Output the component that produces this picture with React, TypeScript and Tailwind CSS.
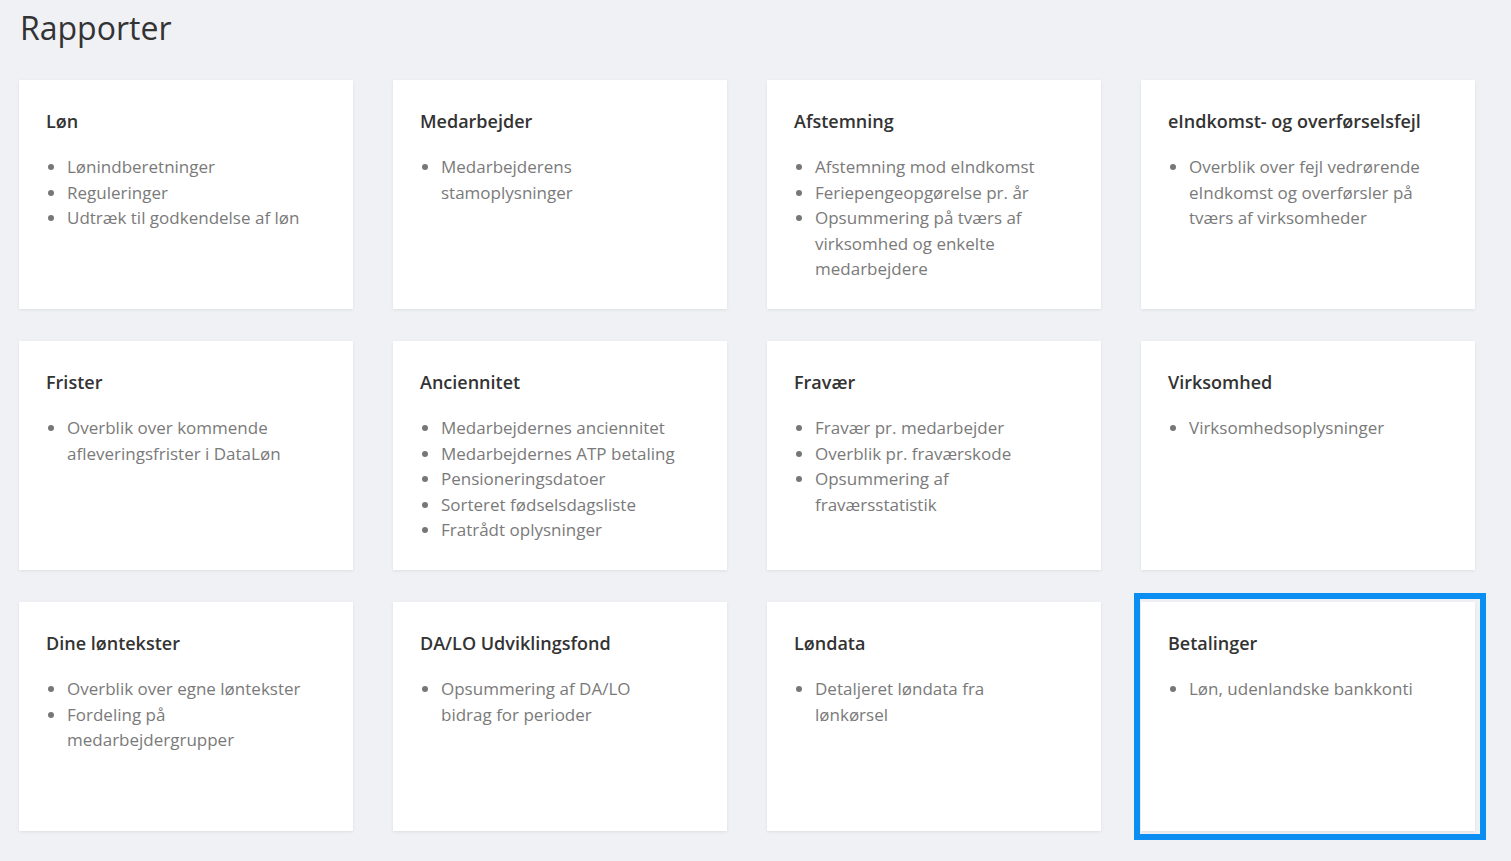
const reports = [
  { title: "Løn", items: ["Lønindberetninger", "Reguleringer", "Udtræk til godkendelse af løn"] },
  { title: "Medarbejder", items: ["Medarbejderens stamoplysninger"] },
  {
    title: "Afstemning",
    items: [
      "Afstemning mod eIndkomst",
      "Feriepengeopgørelse pr. år",
      "Opsummering på tværs af virksomhed og enkelte medarbejdere",
    ],
  },
  {
    title: "eIndkomst- og overførselsfejl",
    items: ["Overblik over fejl vedrørende eIndkomst og overførsler på tværs af virksomheder"],
  },
  { title: "Frister", items: ["Overblik over kommende afleveringsfrister i DataLøn"] },
  {
    title: "Anciennitet",
    items: [
      "Medarbejdernes anciennitet",
      "Medarbejdernes ATP betaling",
      "Pensioneringsdatoer",
      "Sorteret fødselsdagsliste",
      "Fratrådt oplysninger",
    ],
  },
  {
    title: "Fravær",
    items: ["Fravær pr. medarbejder", "Overblik pr. fraværskode", "Opsummering af fraværsstatistik"],
  },
  { title: "Virksomhed", items: ["Virksomhedsoplysninger"] },
  { title: "Dine løntekster", items: ["Overblik over egne løntekster", "Fordeling på medarbejdergrupper"] },
  { title: "DA/LO Udviklingsfond", items: ["Opsummering af DA/LO bidrag for perioder"] },
  { title: "Løndata", items: ["Detaljeret løndata fra lønkørsel"] },
  { title: "Betalinger", items: ["Løn, udenlandske bankkonti"], focused: true },
];

export default function App() {
  return (
    <div className="min-h-screen bg-[#f0f1f5] pl-[19px] pt-[9px] font-['Open_Sans',sans-serif]">
      <h1 className="text-[32px] leading-[38px] text-[#333] pl-px">Rapporter</h1>

      <div className="mt-[33px] grid grid-cols-[repeat(4,334px)] auto-rows-[229px] gap-x-10 gap-y-8">
        {reports.map((report, index) => (
          <div
            key={index}
            className="relative bg-white px-[27px] pt-[29px] shadow-[0_1px_3px_rgba(0,0,0,0.08)]"
          >
            {report.focused && (
              <div className="absolute -left-[7px] -right-[11px] -top-[9px] -bottom-[9px] border-[6px] border-[#0b8ef2] pointer-events-none" />
            )}
            <h2 className="text-[18px] leading-[24px] font-semibold text-[#333]">{report.title}</h2>
            <ul className="mt-[21px] list-disc pl-[21px] pr-[20px] text-[17px] leading-[25.5px] text-[#7a7a7a] marker:text-[#777]">
              {report.items.map((item, idx) => (
                <li key={idx}>{item}</li>
              ))}
            </ul>
          </div>
        ))}
      </div>
    </div>
  );
}
